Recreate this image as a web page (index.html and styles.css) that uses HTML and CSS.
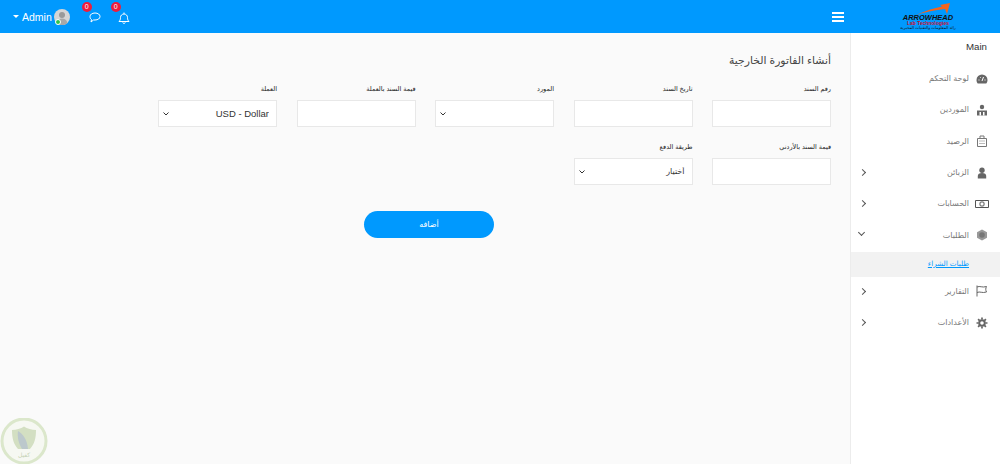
FILE: index.html
```html
<!DOCTYPE html>
<html lang="ar">
<head>
    <meta charset="UTF-8">
    <meta name="viewport" content="width=device-width, initial-scale=1.0">
    <title>أنشاء الفاتورة الخارجية</title>
    <link rel="stylesheet" href="styles.css">
</head>
<body>

<header class="topbar">
    <div class="top-left">
        <span class="caret"></span>
        <span class="user-name">Admin</span>
        <span class="avatar">
            <svg viewBox="0 0 16 16" width="16" height="16">
                <circle cx="8" cy="8" r="8" fill="#d5d5d5"/>
                <circle cx="8" cy="6" r="3" fill="#9a9a9a"/>
                <path d="M2.500 14c1-3.500 3-4.500 5.500-4.500s4.500 1 5.500 4.500a8 8 0 0 1-11 0z" fill="#a8a8a8"/>
            </svg>
            <span class="online"></span>
        </span>
        <span class="top-icon msg">
            <span class="badge">0</span>
            <svg viewBox="0 0 12 11" width="12" height="11" fill="none" stroke="#fff" stroke-width="1">
                <path d="M1 4.500c0-2 2-3.500 5-3.500s5 1.500 5 3.500-2 3.500-5 3.500h-1.500l-2.500 2 .5-2.500c-1-.5-1.500-1.500-1.500-3z"/>
            </svg>
        </span>
        <span class="top-icon bell">
            <span class="badge">0</span>
            <svg viewBox="0 0 12 12" width="12" height="12" fill="none" stroke="#fff" stroke-width="1">
                <path d="M1 9.500c1-1 1.500-2 1.500-4s1.500-3.500 3.500-3.500 3.500 1.500 3.500 3.500.5 3 1.500 4z"/>
                <path d="M4.700 10.500a1.400 1.400 0 0 0 2.600 0M6 0.500v1.500"/>
            </svg>
        </span>
    </div>
    <div class="top-right">
        <span class="burger"><i></i><i></i><i></i></span>
        <div class="logo">
            <svg viewBox="0 0 34 12" width="34" height="12">
                <path d="M0 12C9 8 18 5 26 3.500L24 2l10-2-3 11-2-5C19 7 9 9 0 12z" fill="#f4641e"/>
            </svg>
            <span class="logo-name">ARROWHEAD</span>
            <span class="logo-sub">Lab Technologies</span>
            <span class="logo-ar">رائد المعلومات والتقنيات المخبرية</span>
        </div>
    </div>
</header>

<div class="layout">
    <main class="content">
        <h1 class="page-title">أنشاء الفاتورة الخارجية</h1>

        <form class="invoice-form">
            <div class="field">
                <label>رقم السند</label>
                <input type="text">
            </div>
            <div class="field">
                <label>تاريخ السند</label>
                <input type="text">
            </div>
            <div class="field">
                <label>المورد</label>
                <select><option></option></select>
            </div>
            <div class="field">
                <label>قيمة السند بالعملة</label>
                <input type="text">
            </div>
            <div class="field">
                <label>العملة</label>
                <select><option>USD - Dollar</option></select>
            </div>
            <div class="field">
                <label>قيمة السند بالأردني</label>
                <input type="text">
            </div>
            <div class="field">
                <label>طريقة الدفع</label>
                <select class="select-ar"><option>أختيار</option></select>
            </div>
        </form>

        <div class="form-actions">
            <button type="button" class="btn-add">أضافه</button>
        </div>
    </main>

    <aside class="sidebar">
        <div class="side-title">Main</div>
        <ul class="menu">
            <li class="menu-item">
                <svg class="menu-icon" viewBox="0 0 12 12"><path d="M6 1.500a5.500 5.500 0 0 0-5.500 5.500c0 1.500.5 2.500 1.200 3.500h8.600c.7-1 1.200-2 1.200-3.500a5.500 5.500 0 0 0-5.500-5.500z" fill="#666"/><path d="M6 8l1.500-4M2.500 7h1M8.500 7h1M4 4l.6.7" stroke="#fff" stroke-width="1"/></svg>
                <span>لوحة التحكم</span>
            </li>
            <li class="menu-item">
                <svg class="menu-icon" viewBox="0 0 12 12"><circle cx="6" cy="3" r="2.200" fill="#666"/><path d="M1 6.500h10v5H1z" fill="#666"/><path d="M3.500 8h1.500v3.500h-1.500zM7 8h1.500v3.500H7z" fill="#fff"/></svg>
                <span>الموردين</span>
            </li>
            <li class="menu-item">
                <svg class="menu-icon" viewBox="0 0 12 12" fill="none" stroke="#777" stroke-width="1"><path d="M1.500 3.500h9v8h-9zM4 3.500v-2.500h4v2.500M3.500 6h1M5.500 6h1M7.500 6h1M3.500 8.500h1M5.500 8.500h1M7.500 8.500h1"/></svg>
                <span>الرصيد</span>
            </li>
            <li class="menu-item">
                <svg class="menu-icon" viewBox="0 0 12 12"><circle cx="6" cy="3.200" r="2.700" fill="#666"/><path d="M1.800 11.500v-2.500c0-2 1.500-3 4.200-3s4.200 1 4.200 3v2.500z" fill="#666"/></svg>
                <span>الزبائن</span>
                <span class="chev right"></span>
            </li>
            <li class="menu-item">
                <svg class="menu-icon wide" viewBox="0 0 14 10" fill="none" stroke="#555" stroke-width="1"><path d="M.5 1.500h13v7H.5z"/><rect x="5" y="3" width="4" height="4" rx="1"/></svg>
                <span>الحسابات</span>
                <span class="chev right"></span>
            </li>
            <li class="menu-item open">
                <svg class="menu-icon" viewBox="0 0 12 12"><path d="M6 .5l5 2.800v5.400l-5 2.800-5-2.800v-5.400z" fill="#999"/><circle cx="6" cy="6" r="2.800" fill="#777"/></svg>
                <span>الطلبات</span>
                <span class="chev down"></span>
            </li>
            <li class="submenu"><a href="#">طلبات الشراء</a></li>
            <li class="menu-item">
                <svg class="menu-icon" viewBox="0 0 12 12" fill="none" stroke="#666" stroke-width="1"><path d="M1 .5v11M1 2c3-1.500 5 1 9.500-.5-1 2-1 3.500 0 5.500-4.500 1.500-6.500-1-9.500.5"/></svg>
                <span>التقارير</span>
                <span class="chev right"></span>
            </li>
            <li class="menu-item">
                <svg class="menu-icon" viewBox="0 0 12 12"><path d="M6 3.200a2.800 2.800 0 1 0 0 5.600 2.800 2.800 0 0 0 0-5.600z" fill="none" stroke="#666" stroke-width="2"/><path d="M6 .5v2M6 9.500v2M.5 6h2M9.500 6h2M2.100 2.100l1.500 1.500M8.400 8.400l1.500 1.500M9.900 2.100l-1.500 1.500M3.600 8.400l-1.500 1.500" stroke="#666" stroke-width="1.700"/></svg>
                <span>الأعدادات</span>
                <span class="chev right"></span>
            </li>
        </ul>
    </aside>
</div>

<!-- watermark over the corner -->
<div class="watermark">
    <svg viewBox="0 0 48 46" width="48" height="46">
        <circle cx="24" cy="23" r="22" fill="#f6f8f2" stroke="#dbe7cb" stroke-width="3"/>
        <path d="M12 12c4 0 9-1.500 12-3.500 3 2 8 3.500 12 3.500 0 8-1.500 14-6 19h-12c-4.500-5-6-11-6-19z" fill="#d3dfc2"/>
        <path d="M18 13c5 3 9 8 10 18h-6c-3-5-5-11-4-18z" fill="#bcc8cc"/>
        <text x="24" y="39" font-size="6" text-anchor="middle" fill="#c5d2b5">كفيل</text>
    </svg>
</div>

</body>
</html>
```

FILE: styles.css
```css
* {
    box-sizing: border-box;
}
html, body {
    height: 100%;
}
body {
    margin: 0;
    font-family: "Liberation Sans", "DejaVu Sans", sans-serif;
    background: #fafafa;
    color: #333;
    overflow: hidden;
}

/* top bar */
.topbar {
    height: 33px;
    background: #0099fe;
    display: flex;
    justify-content: space-between;
    align-items: center;
    color: #fff;
}
.top-left {
    display: flex;
    align-items: center;
    padding-left: 13px;
}
.caret {
    width: 0;
    height: 0;
    border-left: 3px solid transparent;
    border-right: 3px solid transparent;
    border-top: 3px solid #fff;
    margin-right: 3px;
}
.user-name {
    font-size: 10.500px;
    margin-right: 2px;
}
.avatar {
    position: relative;
    width: 16px;
    height: 16px;
    margin-right: 19px;
}
.avatar svg {
    display: block;
}
.online {
    position: absolute;
    left: 1px;
    bottom: 0;
    width: 6px;
    height: 6px;
    border-radius: 50%;
    background: #2fc24a;
    border: 1px solid #fff;
}
.top-icon {
    position: relative;
    display: block;
    height: 12px;
    margin-top: 3px;
}
.top-icon svg {
    display: block;
}
.msg {
    margin-right: 17px;
}
.badge {
    position: absolute;
    top: -10px;
    left: -7px;
    width: 10px;
    height: 10px;
    border-radius: 50%;
    background: #ee1c3c;
    font-size: 7px;
    line-height: 10px;
    text-align: center;
}
.top-right {
    display: flex;
    align-items: center;
}
.burger {
    width: 12px;
    margin-right: 57px;
}
.burger i {
    display: block;
    height: 2px;
    background: #fff;
    margin: 2px 0;
}
.logo {
    width: 54px;
    margin-right: 45px;
    display: flex;
    flex-direction: column;
    align-items: center;
    line-height: 1;
}
.logo svg {
    display: block;
    margin-left: 10px;
}
.logo-name {
    font-size: 7.500px;
    font-weight: bold;
    font-style: italic;
    color: #111;
    white-space: nowrap;
    margin-top: -1px;
}
.logo-sub {
    font-size: 5px;
    font-weight: bold;
    color: #c8102e;
    white-space: nowrap;
}
.logo-ar {
    font-size: 4px;
    color: #111;
    white-space: nowrap;
}

/* page */
.layout {
    display: flex;
    height: 431px;
}
.content {
    flex: 1;
    direction: rtl;
    padding: 20px 19px 0 0;
}
.page-title {
    margin: 0 0 16px;
    font-size: 10.800px;
    line-height: 14px;
    font-weight: normal;
    color: #444;
}
.invoice-form {
    width: 673px;
    display: grid;
    grid-template-columns: repeat(5, 119px);
    column-gap: 19.500px;
    row-gap: 14px;
}
.field label {
    display: block;
    font-size: 6.500px;
    line-height: 12px;
    margin-bottom: 5px;
    color: #222;
}
.field input,
.field select {
    display: block;
    width: 100%;
    height: 27px;
    border: 1px solid #e8e8e8;
    border-radius: 0;
    background-color: #fff;
    font-family: inherit;
    font-size: 9.500px;
    color: #333;
    padding: 0 7px;
    outline: none;
}
.field select {
    appearance: none;
    background-image: url("data:image/svg+xml,%3Csvg xmlns='http://www.w3.org/2000/svg' width='6' height='4'%3E%3Cpath d='M.5.5 3 3 5.500.5' fill='none' stroke='%23333'/%3E%3C/svg%3E");
    background-repeat: no-repeat;
    background-position: left 4px center;
}
.field select.select-ar {
    font-size: 8px;
}
.form-actions {
    padding-right: 337px;
    margin-top: 26px;
}
.btn-add {
    display: block;
    width: 130px;
    height: 27px;
    border: 0;
    border-radius: 14px;
    background: #0099fe;
    color: #fff;
    font-family: inherit;
    font-size: 8px;
}

/* sidebar */
.sidebar {
    width: 150px;
    background: #fff;
    border-left: 1px solid #ececec;
}
.side-title {
    font-size: 9.700px;
    line-height: 12px;
    text-align: right;
    padding: 8px 13px 0 0;
    color: #333;
}
.menu {
    list-style: none;
    margin: 10px 0 0;
    padding: 0;
}
.menu-item {
    position: relative;
    height: 31.300px;
    display: flex;
    flex-direction: row-reverse;
    align-items: center;
    padding-right: 12px;
    font-size: 8px;
    color: #777;
}
.menu-icon {
    width: 12px;
    height: 12px;
    margin-left: 7px;
    flex: none;
}
.menu-icon.wide {
    width: 14px;
    margin-right: -1px;
    margin-left: 6px;
}
.chev {
    position: absolute;
    left: 9px;
    top: 13px;
    width: 5px;
    height: 5px;
    border-left: 1px solid #555;
    border-bottom: 1px solid #555;
}
.chev.right {
    transform: rotate(-135deg);
}
.chev.down {
    transform: rotate(-45deg);
    top: 11px;
    left: 8px;
}
.submenu {
    height: 25px;
    margin-top: 1px;
    margin-bottom: -1px;
    background: #f2f2f2;
    text-align: right;
    font-size: 7.200px;
    line-height: 23px;
    padding-right: 31px;
}
.submenu a {
    color: #0099fe;
}

/* watermark */
.watermark {
    position: absolute;
    left: 0;
    bottom: 0;
    width: 48px;
    height: 46px;
}
.watermark svg {
    display: block;
}
```
